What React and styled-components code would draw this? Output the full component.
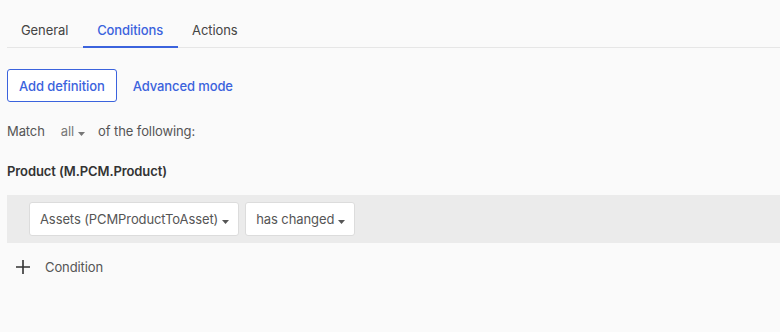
import React from 'react'
import styled, { createGlobalStyle } from 'styled-components'

const Global = createGlobalStyle`
  body {
    margin: 0;
    background: #fafafa;
    font-family: Inter, "Open Sans", sans-serif;
    letter-spacing: -0.1px;
    color: #333;
  }
`

const tabs = ['General', 'Conditions', 'Actions']

const Caret = () => (
  <svg width="7" height="4" viewBox="0 0 7 4" style={{ marginLeft: 4, marginTop: 5 }}>
    <path d="M0 0h7L3.5 4z" fill="currentColor" />
  </svg>
)

const App = () => {
  return (
    <>
      <Global />
      <Page>
        <TabBar>
          {tabs.map((t) => (
            <Tab key={t} active={t === 'Conditions'}>{t}</Tab>
          ))}
        </TabBar>

        <Toolbar>
          <OutlineButton>Add definition</OutlineButton>
          <LinkButton>Advanced mode</LinkButton>
        </Toolbar>

        <MatchRow>
          Match
          <MatchSelect>all<Caret /></MatchSelect>
          of the following:
        </MatchRow>

        <EntityTitle>Product (M.PCM.Product)</EntityTitle>

        <ConditionBand>
          <Select>Assets (PCMProductToAsset)<Caret /></Select>
          <Select>has changed<Caret /></Select>
        </ConditionBand>

        <AddCondition>
          <svg width="14" height="14" viewBox="0 0 14 14">
            <path d="M7 0v14M0 7h14" stroke="#333" strokeWidth="1.6" />
          </svg>
          Condition
        </AddCondition>
      </Page>
    </>
  )
}

const Page = styled.div`
  padding-left: 7px;
`

const TabBar = styled.div`
  display: flex;
  height: 47px;
  border-bottom: 1px solid #e6e6e6;
`

const Tab = styled.div`
  display: flex;
  align-items: center;
  padding: 14px 15px 0 14px;
  font-size: 13px;
  color: ${(p) => (p.active ? '#3b63dd' : '#444')};
  font-weight: ${(p) => (p.active ? 500 : 400)};
  border-bottom: 2px solid ${(p) => (p.active ? '#3b63dd' : 'transparent')};
  margin-bottom: -1px;
`

const Toolbar = styled.div`
  display: flex;
  align-items: center;
  gap: 16px;
  margin-top: 21px;
`

const OutlineButton = styled.button`
  height: 33px;
  padding: 0 11px;
  border: 1px solid #3b63dd;
  border-radius: 3px;
  background: #fff;
  color: #3b63dd;
  font-family: inherit;
  letter-spacing: inherit;
  font-size: 13px;
  font-weight: 500;
`

const LinkButton = styled.span`
  color: #3b63dd;
  font-size: 13px;
  font-weight: 500;
`

const MatchRow = styled.div`
  display: flex;
  align-items: center;
  margin-top: 20px;
  font-size: 13px;
  color: #555;
  height: 18px;
`

const MatchSelect = styled.span`
  display: inline-flex;
  align-items: center;
  margin: 0 13px 0 16px;
  color: #777;
`

const EntityTitle = styled.div`
  margin-top: 23px;
  font-size: 13px;
  font-weight: 600;
  color: #333;
`

const ConditionBand = styled.div`
  display: flex;
  gap: 6px;
  margin-top: 16px;
  padding: 7px 22px;
  background: #ebebeb;
`

const Select = styled.div`
  display: flex;
  align-items: center;
  height: 34px;
  box-sizing: border-box;
  padding: 0 9px 0 10px;
  background: #fff;
  border: 1px solid #dcdcdc;
  border-radius: 3px;
  font-size: 13px;
  color: #555;
`

const AddCondition = styled.div`
  display: flex;
  align-items: center;
  gap: 15px;
  margin-top: 16px;
  padding-left: 9px;
  font-size: 13px;
  color: #555;
`

export default App
